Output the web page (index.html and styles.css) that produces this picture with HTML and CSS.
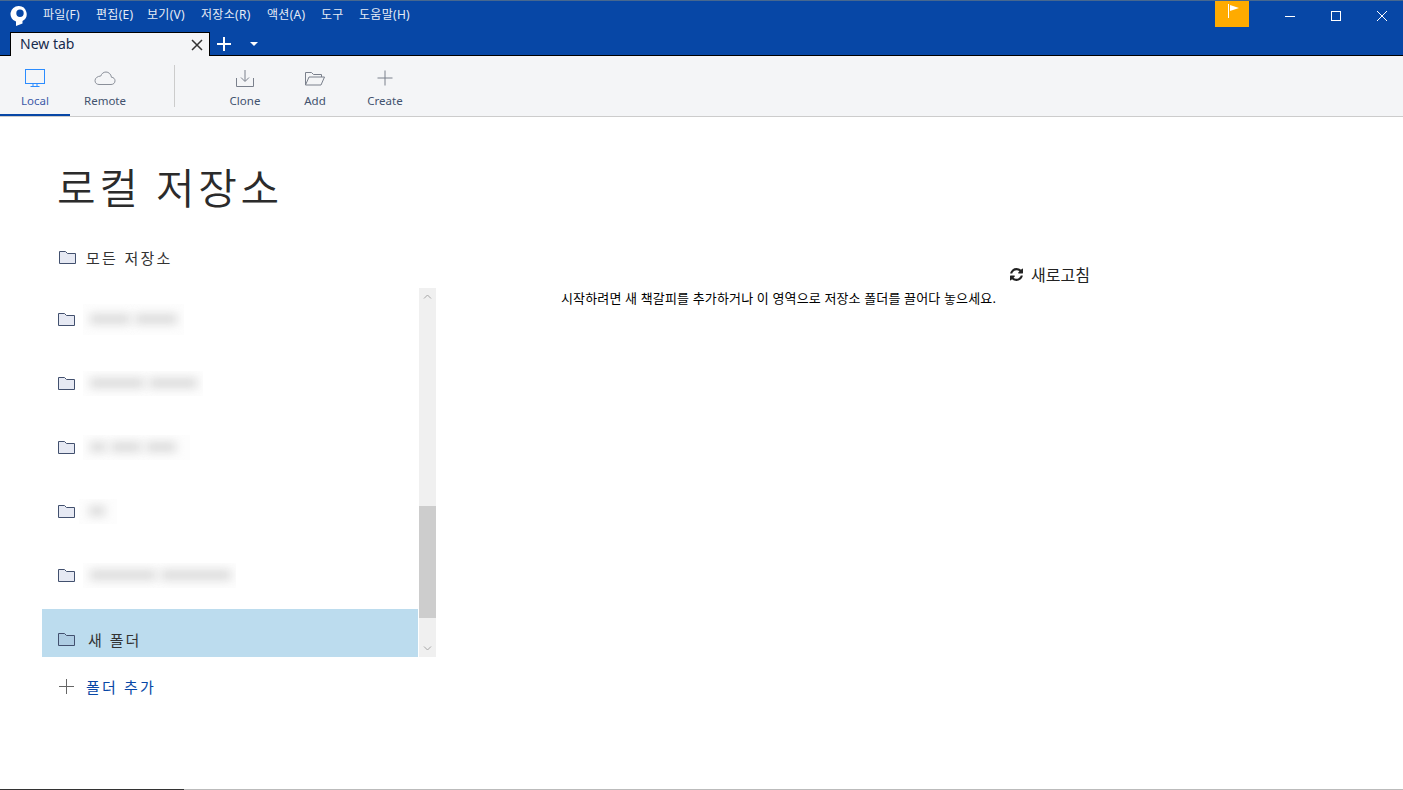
FILE: index.html
```html
<!DOCTYPE html>
<html lang="ko">
<head>
<meta charset="UTF-8" />
<title>Sourcetree</title>
<link rel="stylesheet" href="styles.css">
</head>
<body>

<div class="titlebar">
  <svg class="logo" width="18" height="20" viewBox="0 0 18 20">
    <path fill="#fff" fill-rule="evenodd" d="M8.500 0a8 8 0 0 1 4 15v2.500L6 20v-4.400A8 8 0 0 1 8.500 0zm1.500 3.500a3.700 3.700 0 1 0 0 7.400a3.700 3.700 0 0 0 0-7.400z"/>
  </svg>
  <div class="menu">
    <span class="m1">파일(F)</span>
    <span class="m2">편집(E)</span>
    <span class="m3">보기(V)</span>
    <span class="m4">저장소(R)</span>
    <span class="m5">액션(A)</span>
    <span class="m6">도구</span>
    <span class="m7">도움말(H)</span>
  </div>
  <div class="flag">
    <svg width="14" height="16" viewBox="0 0 14 16">
      <path stroke="#fff" fill="none" d="M1.500 1v14"/>
      <path fill="#fff" d="M3 2l9 3-9 3z"/>
    </svg>
  </div>
  <div class="winbtn">
    <svg width="12" height="12" viewBox="0 0 12 12"><path stroke="#fff" d="M1 6.500h10"/></svg>
  </div>
  <div class="winbtn">
    <svg width="12" height="12" viewBox="0 0 12 12"><rect x="1.500" y="1.500" width="9" height="9" fill="none" stroke="#fff"/></svg>
  </div>
  <div class="winbtn">
    <svg width="12" height="12" viewBox="0 0 12 12"><path stroke="#fff" d="M1 1l10 10M11 1L1 11"/></svg>
  </div>
</div>

<div class="tabstrip">
  <div class="tab">
    <span class="tab-name">New tab</span>
    <svg width="12" height="12" viewBox="0 0 12 12"><path stroke="#333" stroke-width="1.500" d="M1 1l10 10M11 1L1 11"/></svg>
  </div>
  <svg class="tab-add" width="14" height="14" viewBox="0 0 14 14"><path stroke="#fff" stroke-width="2" d="M7 0v14M0 7h14"/></svg>
  <svg class="tab-more" width="8" height="4" viewBox="0 0 8 4"><path fill="#fff" d="M0 0h8L4 4z"/></svg>
</div>

<div class="toolbar">
  <div class="tool active">
    <svg width="22" height="20" viewBox="0 0 22 20" fill="none" stroke="#2b8cff">
      <rect x="1.500" y="0.500" width="19" height="14"/>
      <path d="M9 15v2M13 15v2M6.500 17.500h9"/>
    </svg>
    <span>Local</span>
  </div>
  <div class="tool">
    <svg width="22" height="20" viewBox="0 0 22 20" fill="none" stroke="#8a8f99">
      <path d="M5 15.500h12c2.500 0 4-1.600 4-3.700 0-2-1.500-3.500-3.500-3.500C17 5 14.500 3 12 3 9.500 3 7.500 4.700 6.800 7 3.500 7.200 1 9 1 11.700c0 2.300 1.800 3.800 4 3.800z"/>
    </svg>
    <span>Remote</span>
  </div>
  <div class="tool-sep"></div>
  <div class="tool">
    <svg width="22" height="20" viewBox="0 0 22 20" fill="none" stroke="#7a808c">
      <path d="M11 1v11M7 8.500l4 4 4-4M2.500 9v8.500h17V9"/>
    </svg>
    <span>Clone</span>
  </div>
  <div class="tool">
    <svg width="22" height="20" viewBox="0 0 22 20" fill="none" stroke="#7a808c">
      <path d="M1.500 16V3.500h6l2 2h8V8M1.500 16h15.500l3.500-8H5z"/>
    </svg>
    <span>Add</span>
  </div>
  <div class="tool">
    <svg width="22" height="20" viewBox="0 0 22 20" fill="none" stroke="#7a808c">
      <path d="M11 1.500v15M3.500 9h15"/>
    </svg>
    <span>Create</span>
  </div>
</div>

<div class="main">
  <div class="side">
    <h1 class="heading">로컬 저장소</h1>
    <div class="all-repos">
      <svg class="folder" width="17" height="15" viewBox="0 0 17 15"><path d="M.5 13.500v-12h6l2 2h8v10z"/></svg>
      <span>모든 저장소</span>
    </div>
    <div class="list">
      <div class="rows">
        <div class="row">
          <svg class="folder" width="17" height="15" viewBox="0 0 17 15"><path d="M.5 13.500v-12h6l2 2h8v10z"/></svg>
          <div class="patch w1"><i class="smear s35"></i><i class="smear s40"></i></div>
        </div>
        <div class="row">
          <svg class="folder" width="17" height="15" viewBox="0 0 17 15"><path d="M.5 13.500v-12h6l2 2h8v10z"/></svg>
          <div class="patch w2"><i class="smear s50"></i><i class="smear s45"></i></div>
        </div>
        <div class="row">
          <svg class="folder" width="17" height="15" viewBox="0 0 17 15"><path d="M.5 13.500v-12h6l2 2h8v10z"/></svg>
          <div class="patch w3"><i class="smear s15"></i><i class="smear s25"></i><i class="smear s25"></i></div>
        </div>
        <div class="row">
          <svg class="folder" width="17" height="15" viewBox="0 0 17 15"><path d="M.5 13.500v-12h6l2 2h8v10z"/></svg>
          <div class="patch w4"><i class="smear s15"></i></div>
        </div>
        <div class="row">
          <svg class="folder" width="17" height="15" viewBox="0 0 17 15"><path d="M.5 13.500v-12h6l2 2h8v10z"/></svg>
          <div class="patch w5"><i class="smear s60"></i><i class="smear s65"></i></div>
        </div>
        <div class="row selected">
          <svg class="folder" width="17" height="15" viewBox="0 0 17 15"><path d="M.5 13.500v-12h6l2 2h8v10z"/></svg>
          <span class="row-name">새 폴더</span>
        </div>
      </div>
      <div class="scrollbar">
        <div class="scroll-btn"><svg width="9" height="5" viewBox="0 0 9 5"><path fill="none" stroke="#a6a6a6" d="M1 4.500l3.500-3.500 3.500 3.500"/></svg></div>
        <div class="scroll-thumb"></div>
        <div class="scroll-rest"></div>
        <div class="scroll-btn"><svg width="9" height="5" viewBox="0 0 9 5"><path fill="none" stroke="#a6a6a6" d="M1 .5l3.500 3.500L8 .5"/></svg></div>
      </div>
    </div>
    <div class="add-folder">
      <svg width="17" height="17" viewBox="0 0 17 17"><path stroke="#666" d="M8.500 1v15M1 8.500h15"/></svg>
      <span>폴더 추가</span>
    </div>
  </div>

  <div class="pane">
    <div class="refresh">
      <svg width="13" height="13" viewBox="0 0 1536 1536"><path fill="#222" d="M1511 928q0 5-1 7-64 268-268 434.500t-478 166.500q-146 0-282.500-55t-243.500-157l-129 129q-19 19-45 19t-45-19-19-45v-448q0-26 19-45t45-19h448q26 0 45 19t19 45-19 45l-137 137q71 66 161 102t187 36q134 0 250-65t186-179q11-17 53-117 8-23 30-23h192q13 0 22.500 9.500t9.500 22.500zm25-800v448q0 26-19 45t-45 19h-448q-26 0-45-19t-19-45 19-45l138-138q-148-137-349-137-134 0-250 65t-186 179q-11 17-53 117-8 23-30 23h-199q-13 0-22.500-9.500t-9.500-22.500v-7q65-268 270-434.500t480-166.500q146 0 284 55.500t245 156.500l130-129q19-19 45-19t45 19 19 45z"/></svg>
      <span>새로고침</span>
    </div>
    <div class="hint">시작하려면 새 책갈피를 추가하거나 이 영역으로 저장소 폴더를 끌어다 놓으세요.</div>
  </div>
</div>

<div class="edge">
  <div class="edge-dark"></div>
</div>

</body>
</html>
```

FILE: styles.css
```css
* {
  box-sizing: border-box;
}
html, body {
  margin: 0;
  height: 100%;
}
body {
  display: flex;
  flex-direction: column;
  overflow: hidden;
  background: #fff;
  font-family: "Noto Sans", "Noto Sans CJK KR", sans-serif;
  color: #333;
}

/* title bar */
.titlebar {
  display: flex;
  align-items: flex-start;
  height: 32px;
  background: #0747a6;
  border-top: 1px solid #47688f;
  color: #fff;
}
.logo {
  margin: 5px 0 0 10px;
  flex: none;
}
.menu {
  display: flex;
  margin-left: 15px;
  flex: 1;
  font-size: 12px;
  letter-spacing: .3px;
  line-height: 28px;
  color: #e6ecf5;
}
.menu span {
  flex: none;
}
.m1 { width: 53px; }
.m2 { width: 51px; }
.m3 { width: 54px; }
.m4 { width: 66px; }
.m5 { width: 54px; }
.m6 { width: 38px; }
.flag {
  display: flex;
  align-items: center;
  justify-content: center;
  width: 34px;
  height: 26px;
  margin-right: 18px;
  padding-left: 3px;
  padding-bottom: 6px;
  background: #ffab00;
}
.winbtn {
  display: flex;
  align-items: center;
  justify-content: center;
  flex: none;
  width: 46px;
  height: 29px;
}
.winbtn:last-child {
  margin-right: -2px;
}

/* tabs */
.tabstrip {
  display: flex;
  align-items: center;
  height: 24px;
  padding-left: 10px;
  background: #0747a6;
  border-bottom: 1px solid #000;
}
.tab {
  display: flex;
  align-items: center;
  justify-content: space-between;
  align-self: flex-start;
  width: 200px;
  height: 24px;
  padding: 0 6px 0 9px;
  background: #f4f5f7;
  border: 1px solid #000;
  border-bottom: 0;
}
.tab-name {
  font-size: 14px;
  line-height: 20px;
  margin-bottom: 2px;
  color: #172b4d;
}
.tab-add {
  margin-left: 7px;
}
.tab-more {
  margin-left: 19px;
}

/* toolbar */
.toolbar {
  display: flex;
  height: 61px;
  background: #f4f5f7;
  border-bottom: 1px solid #ccc;
}
.tool {
  display: flex;
  flex-direction: column;
  align-items: center;
  width: 70px;
  height: 60px;
  padding-top: 13px;
  font-size: 11.500px;
  line-height: 18px;
  color: #42526e;
}
.tool span {
  margin-top: 3px;
}
.tool.active {
  border-bottom: 2px solid #0747a6;
  color: #3d5aa8;
}
.tool-sep {
  width: 1px;
  height: 42px;
  margin: 9px 35px 0 34px;
  background: #ccc;
}

/* main */
.main {
  flex: 1;
  display: flex;
  min-height: 0;
}
.side {
  flex: none;
  width: 394px;
  margin-left: 42px;
}
.heading {
  margin: 41px 0 0 15px;
  font-size: 42px;
  font-weight: 350;
  line-height: 60px;
  letter-spacing: 3.600px;
  color: #2b2b2b;
}
.all-repos {
  display: flex;
  align-items: center;
  height: 30px;
  margin-top: 24px;
  padding-left: 17px;
  font-size: 15px;
  letter-spacing: 2.300px;
}
.all-repos span {
  margin-left: 10px;
}
.folder {
  flex: none;
  fill: #e6e9f3;
  stroke: #42506e;
}
.list {
  display: flex;
  justify-content: space-between;
  height: 369px;
  margin-top: 16px;
}
.rows {
  width: 376px;
  padding-top: 1px;
  overflow: hidden;
}
.row {
  display: flex;
  align-items: center;
  height: 64px;
  padding: 0 0 4px 16px;
}
.row.selected {
  background: #bcdcee;
}
.row.selected .folder {
  fill: #aecde3;
}
.row-name {
  margin: 1px 0 0 13px;
  font-size: 15px;
  letter-spacing: 2px;
}

/* hidden repo names */
.patch {
  display: flex;
  align-items: center;
  gap: 5px;
  height: 25px;
  margin-left: 8px;
  padding: 0 7px;
  background: #fdfdfd;
  overflow: hidden;
}
.smear {
  display: block;
  flex: none;
  height: 10px;
  background: #dadada;
  filter: blur(5px);
}
.s15 { width: 16px; }
.s25 { width: 30px; }
.s35 { width: 40px; }
.s40 { width: 42px; }
.s45 { width: 48px; }
.s50 { width: 54px; }
.s60 { width: 66px; }
.s65 { width: 70px; }
.w1 { width: 101px; height: 31px; }
.w2 { width: 120px; }
.w3 { width: 107px; }
.w4 { width: 38px; margin-left: 4px; padding: 0 10px; }
.w5 { width: 153px; }

/* scrollbar */
.scrollbar {
  display: flex;
  flex-direction: column;
  width: 17px;
  padding-top: 0;
  background: #f0f0f0;
}
.scroll-btn {
  display: flex;
  align-items: center;
  justify-content: center;
  flex: none;
  height: 17px;
}
.scroll-thumb {
  flex: none;
  height: 112px;
  margin-top: 201px;
  background: #cdcdcd;
}
.scroll-rest {
  flex: 1;
}

.add-folder {
  display: flex;
  align-items: center;
  height: 30px;
  margin-top: 14px;
  padding-left: 16px;
  font-size: 15px;
  letter-spacing: 2.200px;
  color: #0747a6;
}
.add-folder span {
  margin-left: 11px;
}

/* right pane */
.pane {
  flex: none;
  width: 529px;
  margin-left: 125px;
  padding-top: 145px;
}
.refresh {
  display: flex;
  align-items: center;
  justify-content: flex-end;
  height: 24px;
  font-size: 16px;
  color: #222;
}
.refresh span {
  margin-left: 8px;
}
.hint {
  margin-top: 2px;
  font-size: 13px;
  letter-spacing: .15px;
  line-height: 20px;
  color: #000;
}

.edge {
  flex: none;
  height: 1px;
  background: #bbb;
}
.edge-dark {
  width: 184px;
  height: 1px;
  background: #333;
}
```
